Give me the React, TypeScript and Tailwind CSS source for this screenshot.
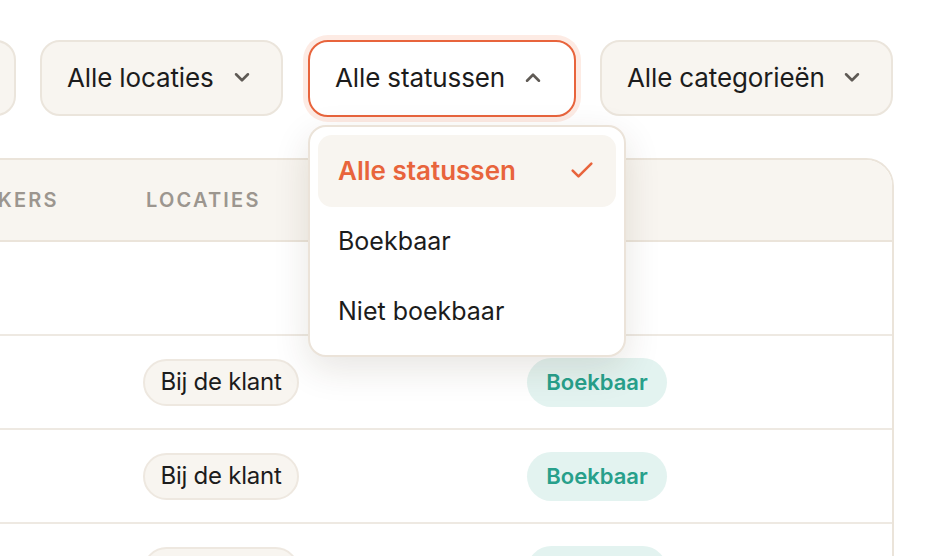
import React from "react";

const font = { fontFamily: '"Inter", "Noto Sans", sans-serif' };

function Chevron({ up = false }: { up?: boolean }) {
  return (
    <svg width="26" height="26" viewBox="0 0 24 24" fill="none" stroke="#5f5a55" strokeWidth="2.4" strokeLinecap="round" strokeLinejoin="round">
      {up ? <path d="M6.5 14.5l5.5-5.5 5.5 5.5" /> : <path d="M6.5 9.5l5.5 5.5 5.5-5.5" />}
    </svg>
  );
}

function Check() {
  return (
    <svg width="28" height="28" viewBox="0 0 24 24" fill="none" stroke="#e8643c" strokeWidth="2.2" strokeLinecap="round" strokeLinejoin="round">
      <path d="M4 12.5l5 5L20 6.5" />
    </svg>
  );
}

function FilterButton({ label, w }: { label: string; w: string }) {
  return (
    <div className={`flex h-[76px] shrink-0 items-center justify-between rounded-[20px] border-2 border-[#ebe5dc] bg-[#f8f5f0] pb-[2px] pl-[25px] pr-[26px] text-[26px] tracking-[-0.005em] text-[#1c1c1c] ${w}`}>
      <span>{label}</span>
      <Chevron />
    </div>
  );
}

function Row({ loc, status }: { loc?: string; status?: string }) {
  return (
    <div className="flex h-[94px] items-center border-b-2 border-[#eee9e2]">
      <div className="w-[266px] shrink-0" />
      <div className="w-[381px] shrink-0">
        {loc && (
          <span className="ml-[-3px] inline-flex h-[47px] w-[156px] items-center justify-center rounded-full border-2 border-[#eee8e0] bg-[#f8f5f0] text-[24px] tracking-[-0.01em] text-[#1c1c1c]">
            {loc}
          </span>
        )}
      </div>
      <div className="flex-1">
        {status && (
          <span className="inline-flex h-[49px] w-[140px] items-center justify-center rounded-full bg-[#e3f3f0] text-[22px] font-semibold text-[#27a08b]">
            {status}
          </span>
        )}
      </div>
    </div>
  );
}

export default function App() {
  return (
    <div className="relative h-[556px] w-[932px] overflow-hidden bg-white" style={font}>
      <div className="flex gap-6 pt-10">
        <div className="ml-[-184px] h-[76px] w-[200px] shrink-0 rounded-[20px] border-2 border-[#ebe5dc] bg-[#f8f5f0]" />
        <FilterButton label="Alle locaties" w="w-[243px]" />
        <div className="relative ml-[1px] shrink-0">
          <div className="flex h-[77px] w-[268px] items-center justify-between rounded-[20px] border-2 border-[#e8643c] bg-white pb-[2px] pl-[25px] pr-[28px] text-[26px] tracking-[-0.005em] text-[#1c1c1c] shadow-[0_0_0_5px_#fdebe4]">
            <span>Alle statussen</span>
            <Chevron up />
          </div>
          <div className="absolute left-0 top-[85px] z-10 w-[318px] rounded-[18px] border-2 border-[#ebe3d9] bg-white p-2 shadow-[0_12px_36px_rgba(60,40,20,0.12)]">
            <div className="flex h-[72px] items-center justify-between rounded-[14px] bg-[#f8f5f0] pb-[2px] pl-[20px] pr-[20px] text-[26px] font-semibold text-[#e8643c]">
              <span>Alle statussen</span>
              <Check />
            </div>
            <div className="flex h-[70px] items-center pl-[20px] text-[25px] text-[#1c1c1c]">Boekbaar</div>
            <div className="flex h-[70px] items-center pl-[20px] text-[25px] text-[#1c1c1c]">Niet boekbaar</div>
          </div>
        </div>
        <FilterButton label="Alle categorieën" w="w-[293px]" />
      </div>

      <div className="mr-[38px] ml-[-122px] mt-[41px] rounded-tr-[28px] border-2 border-[#ebe4da] bg-white">
        <div className="flex h-[82px] items-center rounded-tr-[26px] border-b-2 border-[#ebe4da] bg-[#f8f5f0] text-[20px] font-semibold uppercase tracking-[0.11em] text-[#9c968f]">
          <div className="w-[266px] shrink-0 pl-[31px]">Gebruikers</div>
          <div className="w-[381px] shrink-0">Locaties</div>
          <div className="flex-1">Status</div>
        </div>
        <Row />
        <Row loc="Bij de klant" status="Boekbaar" />
        <Row loc="Bij de klant" status="Boekbaar" />
        <Row loc="Bij de klant" status="Boekbaar" />
      </div>
    </div>
  );
}
